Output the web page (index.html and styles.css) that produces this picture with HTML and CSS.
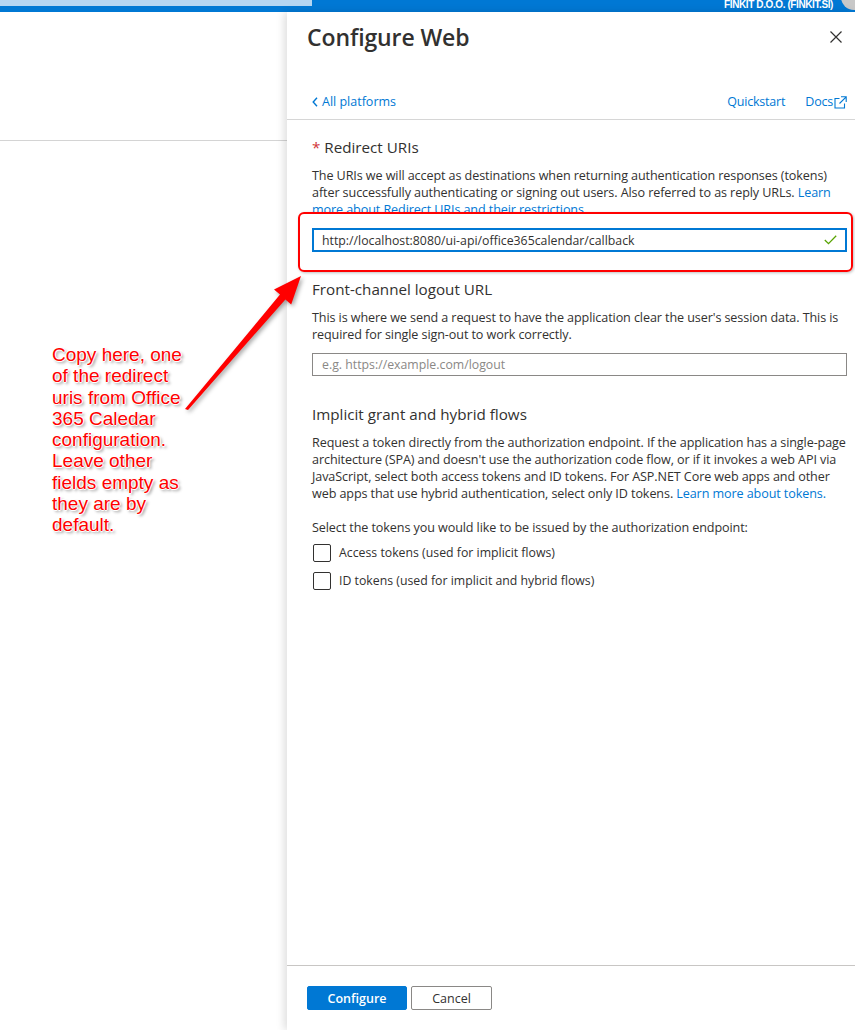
FILE: index.html
```html
<!DOCTYPE html>
<html lang="en">
<head>
  <meta charset="UTF-8" />
  <meta name="viewport" content="width=device-width, initial-scale=1.0" />
  <title>Configure Web</title>
  <link rel="stylesheet" href="styles.css">
</head>
<body>
  <div class="topbar">
    <div class="search"></div>
    <div class="account">
      <span class="acct-mail">miha.novak@finkit.si</span>
      <span class="acct-org">FINKIT D.O.O. (FINKIT.SI)</span>
    </div>
    <div class="avatar"></div>
  </div>

  <div class="workspace">
    <div class="blade-behind">
      <div class="blade-head"></div>
    </div>

    <aside class="panel">
      <header class="panel-header">
        <h1>Configure Web</h1>
        <button class="close" aria-label="Close">
          <svg width="12" height="12" viewBox="0 0 12 12"><path d="M0.5 0.5 L11.5 11.5 M11.5 0.5 L0.5 11.5" stroke="#323130" stroke-width="1.2" fill="none"/></svg>
        </button>
      </header>

      <nav class="panel-nav">
        <a class="back" href="#">
          <svg width="6" height="10" viewBox="0 0 6 10"><path d="M5 0.8 L1.2 5 L5 9.2" stroke="#0078d4" stroke-width="1.4" fill="none"/></svg>
          All platforms
        </a>
        <div class="nav-links">
          <a href="#">Quickstart</a>
          <a href="#">Docs<svg width="13" height="13" viewBox="0 0 13 13"><path d="M5.5 2.5 H1 V12 H10.5 V7.5" stroke="#0078d4" stroke-width="1.1" fill="none"/><path d="M7 0.8 H12.2 V6 M12.2 0.8 L5.5 7.5" stroke="#0078d4" stroke-width="1.1" fill="none"/></svg></a>
        </div>
      </nav>

      <div class="panel-body">
        <section class="field">
          <h2><span class="req">*</span> Redirect URIs</h2>
          <p>The URIs we will accept as destinations when returning authentication responses (tokens) after successfully authenticating or signing out users. Also referred to as reply URLs. <a href="#">Learn more about Redirect URIs and their restrictions</a></p>
          <div class="input input-active">
            <span>http://localhost:8080/ui-api/office365calendar/callback</span>
            <svg width="13" height="10" viewBox="0 0 13 10"><path d="M0.8 5 L4.5 8.6 L12.2 0.8" stroke="#57a300" stroke-width="1.3" fill="none"/></svg>
          </div>
        </section>

        <section class="field field-logout">
          <h2>Front-channel logout URL</h2>
          <p>This is where we send a request to have the application clear the user's session data. This is required for single sign-out to work correctly.</p>
          <div class="input input-empty"><span>e.g. https://example.com/logout</span></div>
        </section>

        <section class="field field-flows">
          <h2>Implicit grant and hybrid flows</h2>
          <p>Request a token directly from the authorization endpoint. If the application has a single-page architecture (SPA) and doesn't use the authorization code flow, or if it invokes a web API via JavaScript, select both access tokens and ID tokens. For ASP.NET Core web apps and other web apps that use hybrid authentication, select only ID tokens. <a href="#">Learn more about tokens.</a></p>
          <p class="select-note">Select the tokens you would like to be issued by the authorization endpoint:</p>
          <label class="check"><span class="box"></span>Access tokens (used for implicit flows)</label>
          <label class="check"><span class="box"></span>ID tokens (used for implicit and hybrid flows)</label>
        </section>
      </div>

      <footer class="panel-footer">
        <button class="btn btn-primary">Configure</button>
        <button class="btn btn-default">Cancel</button>
      </footer>
    </aside>
  </div>

  <!-- annotation drawn over the screenshot -->
  <div class="callout-box"></div>
  <svg class="callout-arrow" width="855" height="1030" viewBox="0 0 855 1030">
    <polygon points="185,409 280,294.6 274,289.6 301,276 291.2,304.6 285.4,299.4 188,410" fill="#ff0000"/>
  </svg>
  <p class="callout-text">Copy here, one<br>of the redirect<br>uris from Office<br>365 Caledar<br>configuration.<br>Leave other<br>fields empty as<br>they are by<br>default.</p>
</body>
</html>
```

FILE: styles.css
```css
* {
  box-sizing: border-box;
}

body {
  margin: 0;
  height: 1030px;
  overflow: hidden;
  font-family: "Open Sans", "Noto Sans", sans-serif;
  color: #323130;
  background: #fff;
  position: relative;
}

a {
  color: #0078d4;
  text-decoration: none;
}

.topbar {
  height: 12px;
  background: #0078d4;
  display: flex;
  align-items: flex-start;
  overflow: hidden;
}

.search {
  width: 312px;
  height: 6px;
  background: #b5d6f2;
}

.account {
  margin-left: auto;
  display: flex;
  flex-direction: column;
  align-items: flex-end;
  margin-top: -13px;
  font-family: "Liberation Sans", Arial, sans-serif;
  color: #fff;
  font-size: 10px;
  line-height: 12px;
  font-weight: bold;
}

.acct-mail {
  font-weight: normal;
  font-size: 13px;
  margin-right: 150px;
}

.acct-org {
  letter-spacing: -0.4px;
}

.avatar {
  width: 26px;
  height: 26px;
  border-radius: 50%;
  background: #c8c8c8;
  margin: -16px -12px 0 8px;
}

.workspace {
  display: flex;
  height: 1018px;
}

.blade-behind {
  width: 287px;
  flex: none;
}

.blade-head {
  height: 129px;
  border-bottom: 1px solid #d4d4d4;
}

/* side panel */
.panel {
  flex: 1;
  display: flex;
  flex-direction: column;
  background: #fff;
  box-shadow: -3px 0 8px rgba(0, 0, 0, 0.13);
}

.panel-header {
  display: flex;
  justify-content: space-between;
  align-items: center;
  padding: 9px 13px 0 20px;
}

.panel-header h1 {
  margin: 0;
  font-size: 23px;
  line-height: 32px;
  font-weight: 600;
  color: #323130;
  letter-spacing: -0.1px;
}

.close {
  border: none;
  background: none;
  padding: 0;
  width: 12px;
  height: 12px;
  display: flex;
}

.panel-nav {
  margin-top: 39px;
  padding: 0 8px 7px 25px;
  display: flex;
  justify-content: space-between;
  align-items: center;
  line-height: 20px;
  font-size: 12.5px;
  border-bottom: 1px solid #d6d6d6;
}

.back {
  display: flex;
  align-items: center;
  gap: 4px;
}

.nav-links {
  display: flex;
  gap: 20px;
}

.nav-links a {
  display: flex;
  align-items: center;
  gap: 1px;
  letter-spacing: -0.2px;
}

.panel-body {
  flex: 1;
  padding: 17px 8px 0 25px;
}

.field h2 {
  margin: 0;
  font-size: 15.2px;
  line-height: 20px;
  font-weight: normal;
  color: #323130;
}

.req {
  color: #d13438;
}

.field p {
  margin: 10px 0 0;
  font-size: 12.6px;
  line-height: 17px;
  letter-spacing: -0.1px;
}

.input {
  margin-top: 10px;
  height: 24px;
  display: flex;
  align-items: center;
  justify-content: space-between;
  font-size: 12.3px;
  padding: 0 8px 0 8px;
}

.input-active {
  border: 2px solid #0078d4;
}

.input-empty {
  margin-top: 10px;
  height: 23px;
  border: 1px solid #8a8886;
  color: #8a8886;
  padding-left: 9px;
}

.field-logout {
  margin-top: 27px;
}

.field-flows {
  margin-top: 28px;
}

.select-note {
  margin-top: 17px !important;
}

.check {
  display: flex;
  align-items: center;
  gap: 8px;
  margin-top: 7px;
  font-size: 12.3px;
  line-height: 20px;
}

.check + .check {
  margin-top: 8px;
}

.box {
  width: 18px;
  height: 18px;
  border: 1px solid #323130;
  border-radius: 2px;
  margin-left: 1px;
}

.panel-footer {
  height: 65px;
  border-top: 1px solid #c8c6c4;
  padding: 20px 20px 0 20px;
  display: flex;
  align-items: flex-start;
  gap: 4px;
}

.btn {
  height: 24px;
  font-family: inherit;
  font-size: 12.5px;
  border-radius: 2px;
  padding: 0;
}

.btn-primary {
  width: 100px;
  background: #0078d4;
  border: 1px solid #0078d4;
  color: #fff;
  font-weight: 600;
}

.btn-default {
  width: 81px;
  background: #fff;
  border: 1px solid #8a8886;
  color: #323130;
}

/* annotation overlay */
.callout-box {
  position: absolute;
  left: 298px;
  top: 212px;
  width: 555px;
  height: 60px;
  border: 2px solid #ff0000;
  border-radius: 6px;
  box-shadow: 1px 1px 3px rgba(0, 0, 0, 0.25);
}

.callout-arrow {
  position: absolute;
  left: 0;
  top: 0;
  pointer-events: none;
  filter: drop-shadow(2px 2px 2px rgba(0, 0, 0, 0.35));
}

.callout-text {
  position: absolute;
  left: 52px;
  top: 344px;
  margin: 0;
  font-family: "Liberation Sans", Arial, sans-serif;
  font-size: 19px;
  line-height: 21.3px;
  color: #ff0000;
  text-shadow: 1px 0 0 #fff, -1px 0 0 #fff, 0 1px 0 #fff, 0 -1px 0 #fff, 2px 2px 3px rgba(0, 0, 0, 0.45);
}
```
